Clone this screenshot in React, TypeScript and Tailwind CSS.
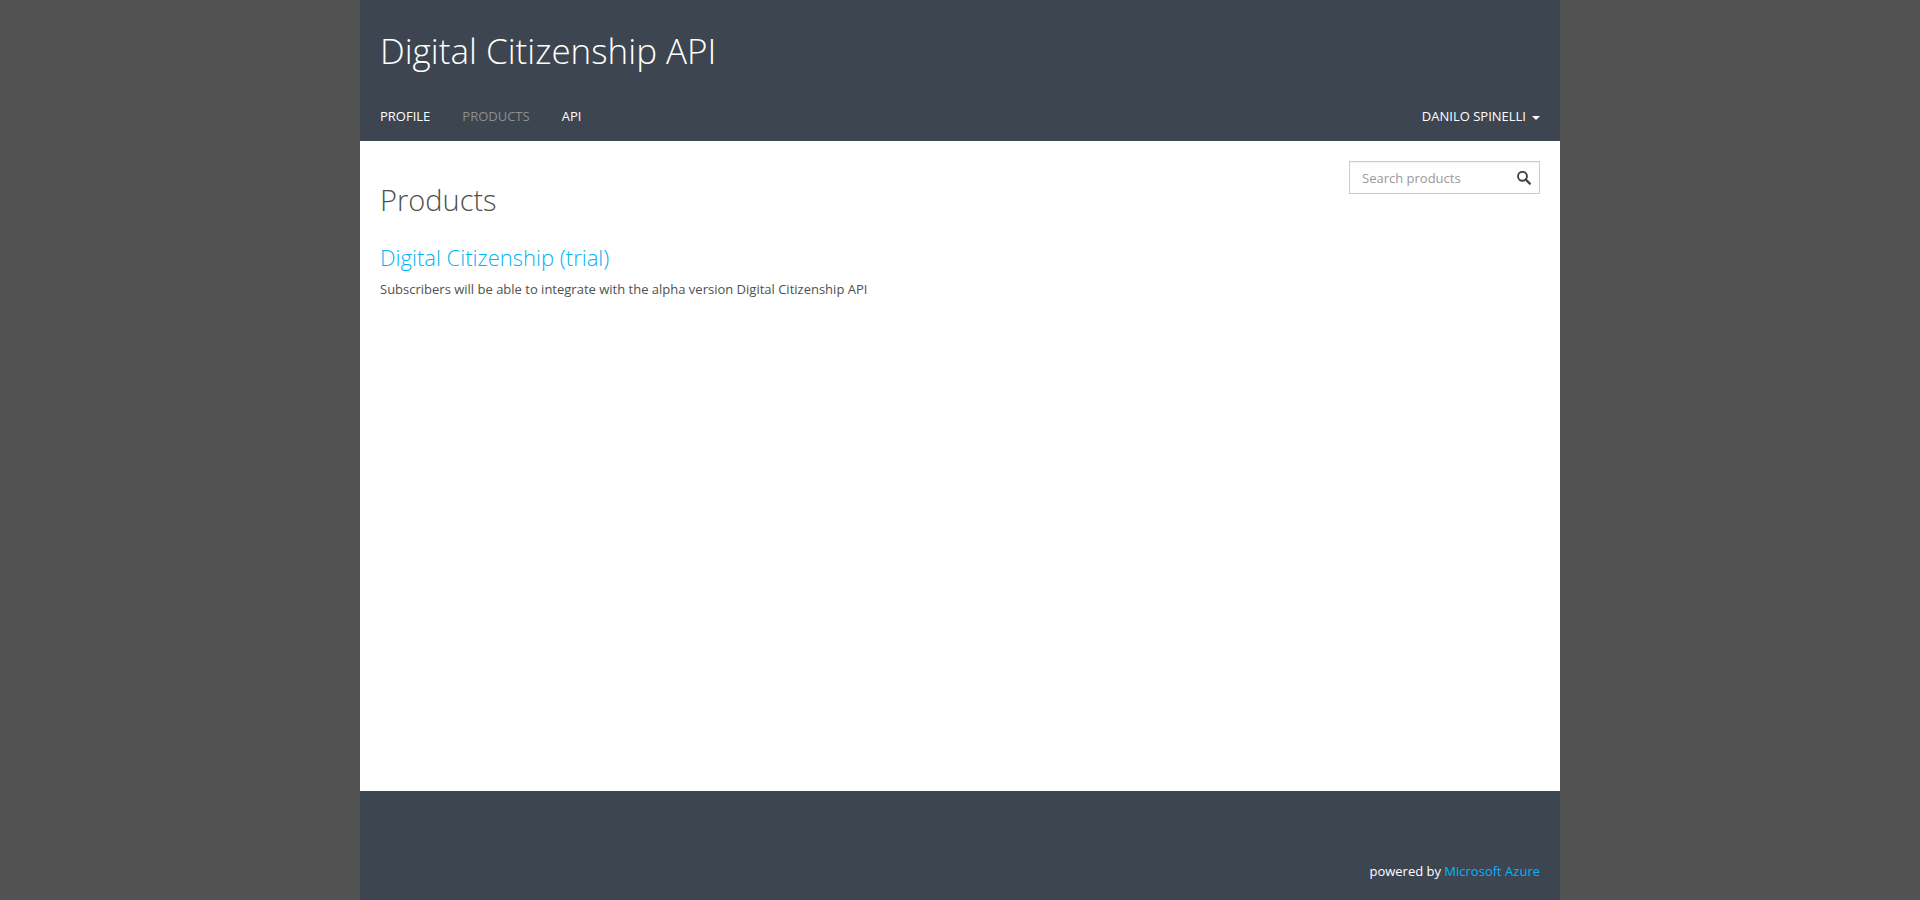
import React from "react";

function SearchIcon() {
  return (
    <svg viewBox="0 0 14 14" className="h-3.5 w-3.5" aria-hidden="true">
      <circle cx="5.5" cy="5.3" r="4.5" fill="none" stroke="currentColor" strokeWidth="1.9" />
      <path d="M9 8.8l3.8 3.8" stroke="currentColor" strokeWidth="2.3" strokeLinecap="round" />
    </svg>
  );
}

const navLinks = [
  { label: "Profile", active: false },
  { label: "Products", active: true },
  { label: "API", active: false },
];

function Header() {
  return (
    <header className="bg-[#3d4550] px-5 pt-7 pb-[9px] text-white">
      <h1 className="text-[35px] leading-[46px] font-light">Digital Citizenship API</h1>
      <nav className="mt-[26px] flex h-8 items-center justify-between text-[13px] leading-5 uppercase">
        <ul className="flex gap-8">
          {navLinks.map((link) => (
            <li key={link.label}>
              <a href="#" className={link.active ? "text-[#8e8e8e]" : "text-white"}>
                {link.label}
              </a>
            </li>
          ))}
        </ul>
        <button type="button" className="flex items-center gap-1.5 uppercase">
          Danilo Spinelli
          <svg viewBox="0 0 8 4" className="mt-1 h-1 w-2" aria-hidden="true">
            <path d="M0 0h8L4 4z" fill="currentColor" />
          </svg>
        </button>
      </nav>
    </header>
  );
}

function SearchForm() {
  return (
    <form className="flex h-[33px] w-[191px] items-center border border-[#cccccc] pr-2 pl-3 inset-shadow-xs">
      <input
        type="text"
        aria-label="Search products"
        placeholder="Search products"
        className="min-w-0 flex-1 bg-transparent text-[13px] outline-none placeholder:text-[#999999]"
      />
      <button type="submit" aria-label="Search" className="text-[#444444]">
        <SearchIcon />
      </button>
    </form>
  );
}

export default function App() {
  return (
    <div className="min-h-screen bg-[#525252] font-['Open_Sans','Noto_Sans',sans-serif] text-[13px] leading-5 text-[#505050]">
      <div className="mx-auto flex min-h-screen max-w-[1200px] flex-col bg-white">
        <Header />
        <main className="flex flex-1 items-start justify-between px-5 pt-5">
          <div className="pt-5">
            <h2 className="text-[29px] leading-[38px] font-light">Products</h2>
            <h3 className="mt-[22px] text-[22px] leading-8 font-light">
              <a href="#" className="text-[#00b4f5]">Digital Citizenship (trial)</a>
            </h3>
            <p className="mt-1.5">
              Subscribers will be able to integrate with the alpha version Digital Citizenship API
            </p>
          </div>
          <SearchForm />
        </main>
        <footer className="bg-[#3d4550] px-5 pt-[70px] pb-[19px] text-right text-white">
          powered by <a href="#" className="text-[#00b4ff]">Microsoft Azure</a>
        </footer>
      </div>
    </div>
  );
}
